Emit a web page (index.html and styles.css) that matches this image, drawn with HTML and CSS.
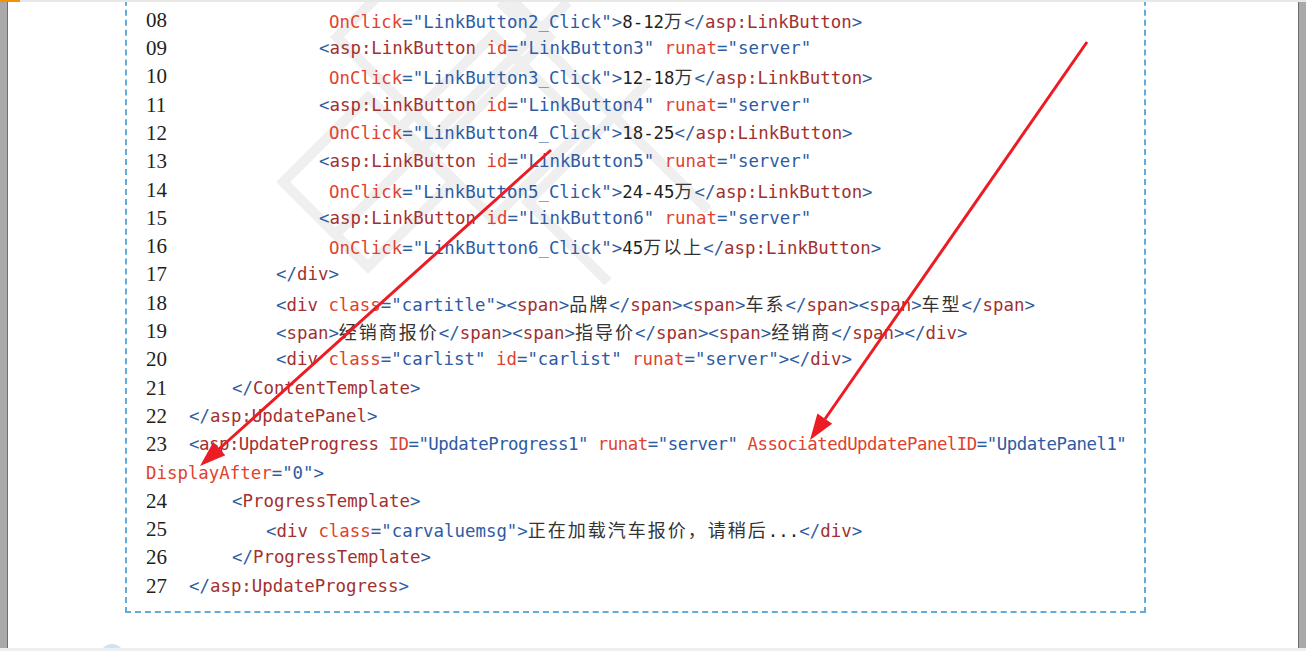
FILE: index.html
```html
<!DOCTYPE html>
<html>

<head>
    <link rel="stylesheet" href="styles.css">
</head>

<body>
    <div class="viewer">
        <div class="topbar"><div class="tab-mark"></div></div>

        <div class="main">
            <div class="side side-left"></div>

            <div class="page">
                <!-- faint publisher watermark behind the listing -->
                <svg class="watermark" width="1282" height="646" viewBox="0 0 1282 646">
                    <g fill="none" stroke="#efefef" stroke-width="10">
                        <rect x="360" y="-40" width="150" height="150" transform="rotate(45 435 35)"/>
                        <rect x="420" y="60" width="130" height="130" transform="rotate(45 485 125)"/>
                        <rect x="300" y="120" width="120" height="120" transform="rotate(45 360 180)"/>
                        <path d="M492 0 L700 208"/>
                        <path d="M560 0 L330 230"/>
                        <path d="M640 80 L520 200 L600 280"/>
                    </g>
                </svg>

                <div class="sheet">
                    <div class="row"><span class="num">08</span><span class="code i13"><span class="a">OnClick</span><span class="p">=</span><span class="v">"LinkButton2_Click"</span><span class="p">&gt;</span><span class="x">8-12<span class="cn">万</span></span><span class="p">&lt;/</span><span class="t">asp:LinkButton</span><span class="p">&gt;</span></span></div>
                    <div class="row"><span class="num">09</span><span class="code i12"><span class="p">&lt;</span><span class="t">asp:LinkButton</span> <span class="a">id</span><span class="p">=</span><span class="v">"LinkButton3"</span> <span class="a">runat</span><span class="p">=</span><span class="v">"server"</span></span></div>
                    <div class="row"><span class="num">10</span><span class="code i13"><span class="a">OnClick</span><span class="p">=</span><span class="v">"LinkButton3_Click"</span><span class="p">&gt;</span><span class="x">12-18<span class="cn">万</span></span><span class="p">&lt;/</span><span class="t">asp:LinkButton</span><span class="p">&gt;</span></span></div>
                    <div class="row"><span class="num">11</span><span class="code i12"><span class="p">&lt;</span><span class="t">asp:LinkButton</span> <span class="a">id</span><span class="p">=</span><span class="v">"LinkButton4"</span> <span class="a">runat</span><span class="p">=</span><span class="v">"server"</span></span></div>
                    <div class="row"><span class="num">12</span><span class="code i13"><span class="a">OnClick</span><span class="p">=</span><span class="v">"LinkButton4_Click"</span><span class="p">&gt;</span><span class="x">18-25</span><span class="p">&lt;/</span><span class="t">asp:LinkButton</span><span class="p">&gt;</span></span></div>
                    <div class="row"><span class="num">13</span><span class="code i12"><span class="p">&lt;</span><span class="t">asp:LinkButton</span> <span class="a">id</span><span class="p">=</span><span class="v">"LinkButton5"</span> <span class="a">runat</span><span class="p">=</span><span class="v">"server"</span></span></div>
                    <div class="row"><span class="num">14</span><span class="code i13"><span class="a">OnClick</span><span class="p">=</span><span class="v">"LinkButton5_Click"</span><span class="p">&gt;</span><span class="x">24-45<span class="cn">万</span></span><span class="p">&lt;/</span><span class="t">asp:LinkButton</span><span class="p">&gt;</span></span></div>
                    <div class="row"><span class="num">15</span><span class="code i12"><span class="p">&lt;</span><span class="t">asp:LinkButton</span> <span class="a">id</span><span class="p">=</span><span class="v">"LinkButton6"</span> <span class="a">runat</span><span class="p">=</span><span class="v">"server"</span></span></div>
                    <div class="row"><span class="num">16</span><span class="code i13"><span class="a">OnClick</span><span class="p">=</span><span class="v">"LinkButton6_Click"</span><span class="p">&gt;</span><span class="x">45<span class="cn">万以上</span></span><span class="p">&lt;/</span><span class="t">asp:LinkButton</span><span class="p">&gt;</span></span></div>
                    <div class="row"><span class="num">17</span><span class="code i8"><span class="p">&lt;/</span><span class="t">div</span><span class="p">&gt;</span></span></div>
                    <div class="row"><span class="num">18</span><span class="code i8"><span class="p">&lt;</span><span class="t">div</span> <span class="a">class</span><span class="p">=</span><span class="v">"cartitle"</span><span class="p">&gt;&lt;</span><span class="t">span</span><span class="p">&gt;</span><span class="cn">品牌</span><span class="p">&lt;/</span><span class="t">span</span><span class="p">&gt;&lt;</span><span class="t">span</span><span class="p">&gt;</span><span class="cn">车系</span><span class="p">&lt;/</span><span class="t">span</span><span class="p">&gt;&lt;</span><span class="t">span</span><span class="p">&gt;</span><span class="cn">车型</span><span class="p">&lt;/</span><span class="t">span</span><span class="p">&gt;</span></span></div>
                    <div class="row"><span class="num">19</span><span class="code i8"><span class="p">&lt;</span><span class="t">span</span><span class="p">&gt;</span><span class="cn">经销商报价</span><span class="p">&lt;/</span><span class="t">span</span><span class="p">&gt;&lt;</span><span class="t">span</span><span class="p">&gt;</span><span class="cn">指导价</span><span class="p">&lt;/</span><span class="t">span</span><span class="p">&gt;&lt;</span><span class="t">span</span><span class="p">&gt;</span><span class="cn">经销商</span><span class="p">&lt;/</span><span class="t">span</span><span class="p">&gt;&lt;/</span><span class="t">div</span><span class="p">&gt;</span></span></div>
                    <div class="row"><span class="num">20</span><span class="code i8"><span class="p">&lt;</span><span class="t">div</span> <span class="a">class</span><span class="p">=</span><span class="v">"carlist"</span> <span class="a">id</span><span class="p">=</span><span class="v">"carlist"</span> <span class="a">runat</span><span class="p">=</span><span class="v">"server"</span><span class="p">&gt;&lt;/</span><span class="t">div</span><span class="p">&gt;</span></span></div>
                    <div class="row"><span class="num">21</span><span class="code i4"><span class="p">&lt;/</span><span class="t">ContentTemplate</span><span class="p">&gt;</span></span></div>
                    <div class="row"><span class="num">22</span><span class="code"><span class="p">&lt;/</span><span class="t">asp:UpdatePanel</span><span class="p">&gt;</span></span></div>
                    <div class="row"><span class="num">23</span><span class="code tight"><span class="p">&lt;</span><span class="t">asp:UpdateProgress</span> <span class="a">ID</span><span class="p">=</span><span class="v">"UpdateProgress1"</span> <span class="a">runat</span><span class="p">=</span><span class="v">"server"</span> <span class="a">AssociatedUpdatePanelID</span><span class="p">=</span><span class="v">"UpdatePanel1"</span></span></div>
                    <div class="row"><span class="code"><span class="a">DisplayAfter</span><span class="p">=</span><span class="v">"0"</span><span class="p">&gt;</span></span></div>
                    <div class="row"><span class="num">24</span><span class="code i4"><span class="p">&lt;</span><span class="t">ProgressTemplate</span><span class="p">&gt;</span></span></div>
                    <div class="row"><span class="num">25</span><span class="code i7"><span class="p">&lt;</span><span class="t">div</span> <span class="a">class</span><span class="p">=</span><span class="v">"carvaluemsg"</span><span class="p">&gt;</span><span class="cn">正在加载汽车报价，请稍后</span><span class="x">...</span><span class="p">&lt;/</span><span class="t">div</span><span class="p">&gt;</span></span></div>
                    <div class="row"><span class="num">26</span><span class="code i4"><span class="p">&lt;/</span><span class="t">ProgressTemplate</span><span class="p">&gt;</span></span></div>
                    <div class="row"><span class="num">27</span><span class="code"><span class="p">&lt;/</span><span class="t">asp:UpdateProgress</span><span class="p">&gt;</span></span></div>
                </div>

                <!-- annotation arrows drawn over the listing -->
                <svg class="arrows" width="1282" height="646" viewBox="8 2 1282 646">
                    <g stroke="#ec1c24" stroke-width="3" fill="#ec1c24">
                        <line x1="551" y1="150" x2="219" y2="449"/>
                        <polygon points="200,466 225.3,455.3 213.3,441.9" stroke="none"/>
                        <line x1="1087" y1="42" x2="825" y2="419"/>
                        <polygon points="810,440 832.2,423.8 817.4,413.6" stroke="none"/>
                    </g>
                </svg>

                <div class="page-dot"></div>
            </div>

            <div class="side side-right"></div>
        </div>

        <div class="bottombar"></div>
    </div>
</body>

</html>
```

FILE: styles.css
```css
html,
body {
    margin: 0;
    height: 100%;
    background-color: #fff;
    overflow: hidden;
}

.viewer {
    display: flex;
    flex-direction: column;
    height: 651px;
}

.topbar {
    height: 2px;
    background-color: #e8e8e8;
    flex-shrink: 0;
    position: relative;
    z-index: 2;
}

.tab-mark {
    width: 20px;
    height: 2px;
    background-color: #f39200;
}

.main {
    display: flex;
    flex: 1;
    min-height: 0;
}

.side {
    width: 7px;
    flex-shrink: 0;
    background-color: #a9a9a9;
}

.side-left {
    border-right: 1px solid #6e6e6e;
}

.side-right {
    border-left: 1px solid #6e6e6e;
}

.page {
    flex: 1;
    position: relative;
    overflow: hidden;
}

.watermark,
.arrows {
    position: absolute;
    left: 0;
    top: 0;
}

.arrows {
    z-index: 3;
}

.sheet {
    position: relative;
    width: 1021px;
    margin: -42px 0 0 117px;
    padding: 43.8px 0 11px 19px;
    box-sizing: border-box;
    border: 2px dashed #62acdb;
}

.row {
    display: flex;
    height: 28.3px;
    line-height: 28.3px;
    white-space: nowrap;
}

.num {
    width: 43px;
    flex-shrink: 0;
    font-family: "Liberation Serif", serif;
    font-size: 21px;
    color: #231f20;
}

.code {
    white-space: pre;
    font-family: "DejaVu Sans Mono", monospace;
    font-size: 17.4px;
    color: #222;
}

.i4 { padding-left: 43px; }
.i7 { padding-left: 77px; }
.i8 { padding-left: 87px; }
.i12 { padding-left: 130px; }
.i13 { padding-left: 140px; }

.tight {
    letter-spacing: -0.5px;
}

.p { color: #2f5e9f; }
.t { color: #a2302f; }
.a { color: #e0422e; }
.v { color: #2d5ba4; }
.x { color: #231f20; }

.cn {
    font-family: "Noto Sans CJK SC", sans-serif;
    font-size: 18px;
    letter-spacing: 2px;
    color: #333;
}

.page-dot {
    position: absolute;
    left: 92px;
    bottom: -20px;
    width: 24px;
    height: 24px;
    border-radius: 50%;
    background-color: #cde2f2;
}

.bottombar {
    height: 3px;
    flex-shrink: 0;
    background-color: #eeeeee;
    position: relative;
    z-index: 2;
}
```
